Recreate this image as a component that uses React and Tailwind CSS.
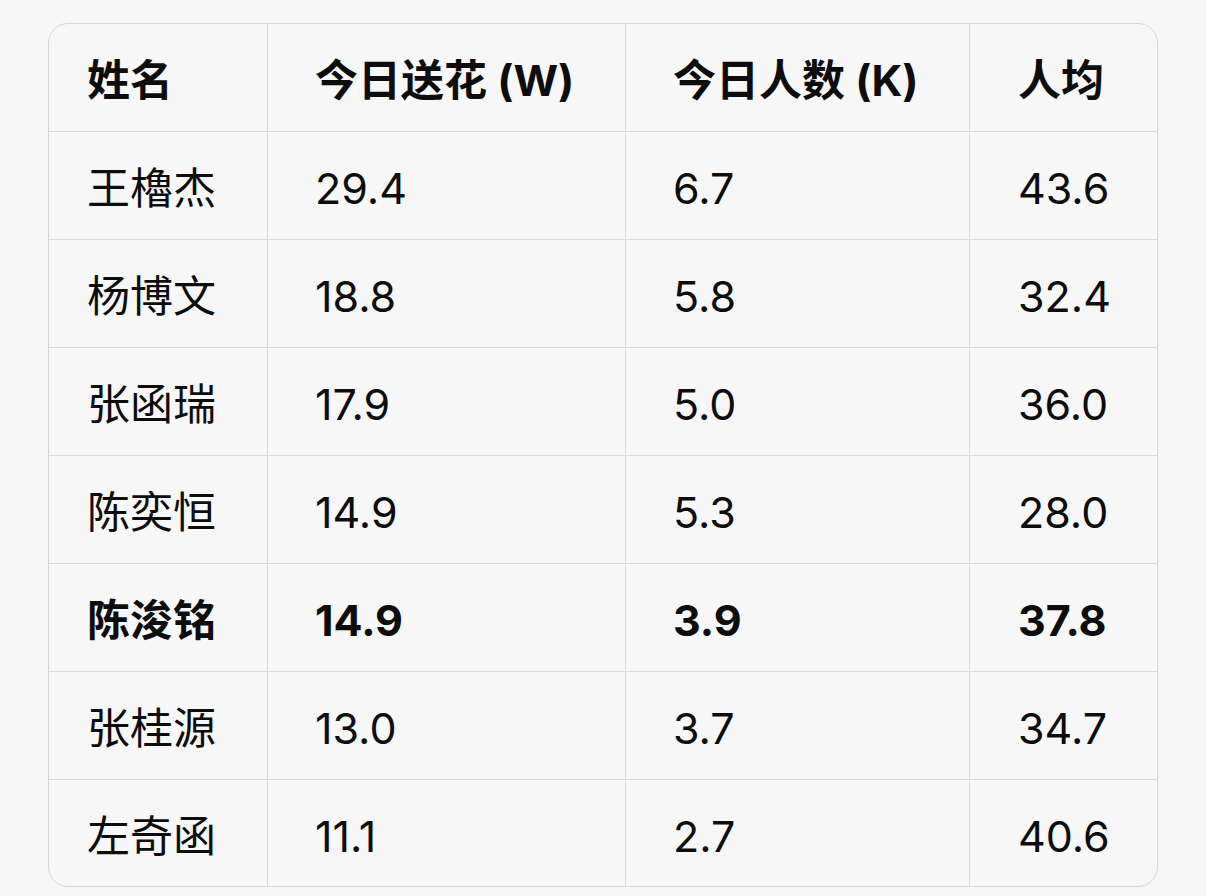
import React from "react";

const header = ["姓名", "今日送花 (W)", "今日人数 (K)", "人均"];
const rows = [
  ["王櫓杰", "29.4", "6.7", "43.6"],
  ["杨博文", "18.8", "5.8", "32.4"],
  ["张函瑞", "17.9", "5.0", "36.0"],
  ["陈奕恒", "14.9", "5.3", "28.0"],
  ["陈浚铭", "14.9", "3.9", "37.8", true],
  ["张桂源", "13.0", "3.7", "34.7"],
  ["左奇函", "11.1", "2.7", "40.6"],
];

const colCls = [
  "w-[219px] pl-[38px] border-r border-[#d9d9d9]",
  "w-[358px] pl-[47px] border-r border-[#d9d9d9]",
  "w-[344px] pl-[47px] border-r border-[#d9d9d9]",
  "flex-1 pl-[48px]",
];

function Row({ cells, bold, last }) {
  return (
    <div className={`flex ${last ? "h-[106px]" : "h-[108px] border-b border-[#d9d9d9]"}`}>
      {cells.map((c, i) => (
        <div key={i} className={`${colCls[i]} flex items-center pt-[6px] ${bold ? "font-bold" : "font-normal"}`}>
          {c}
        </div>
      ))}
    </div>
  );
}

export default function App() {
  return (
    <div
      className="w-[1206px] h-[896px] bg-[#f7f7f7] text-[#0d0d0d] text-[43px] leading-none pt-[23px] pl-[48px]"
      style={{ fontFamily: 'Inter, "Noto Sans CJK SC", sans-serif' }}
    >
      <div className="w-[1110px] border border-[#d6d6d6] rounded-[20px] overflow-hidden">
        <Row cells={header} bold />
        {rows.map((r, i) => (
          <Row key={i} cells={r.slice(0, 4)} bold={r[4]} last={i === rows.length - 1} />
        ))}
      </div>
    </div>
  );
}
